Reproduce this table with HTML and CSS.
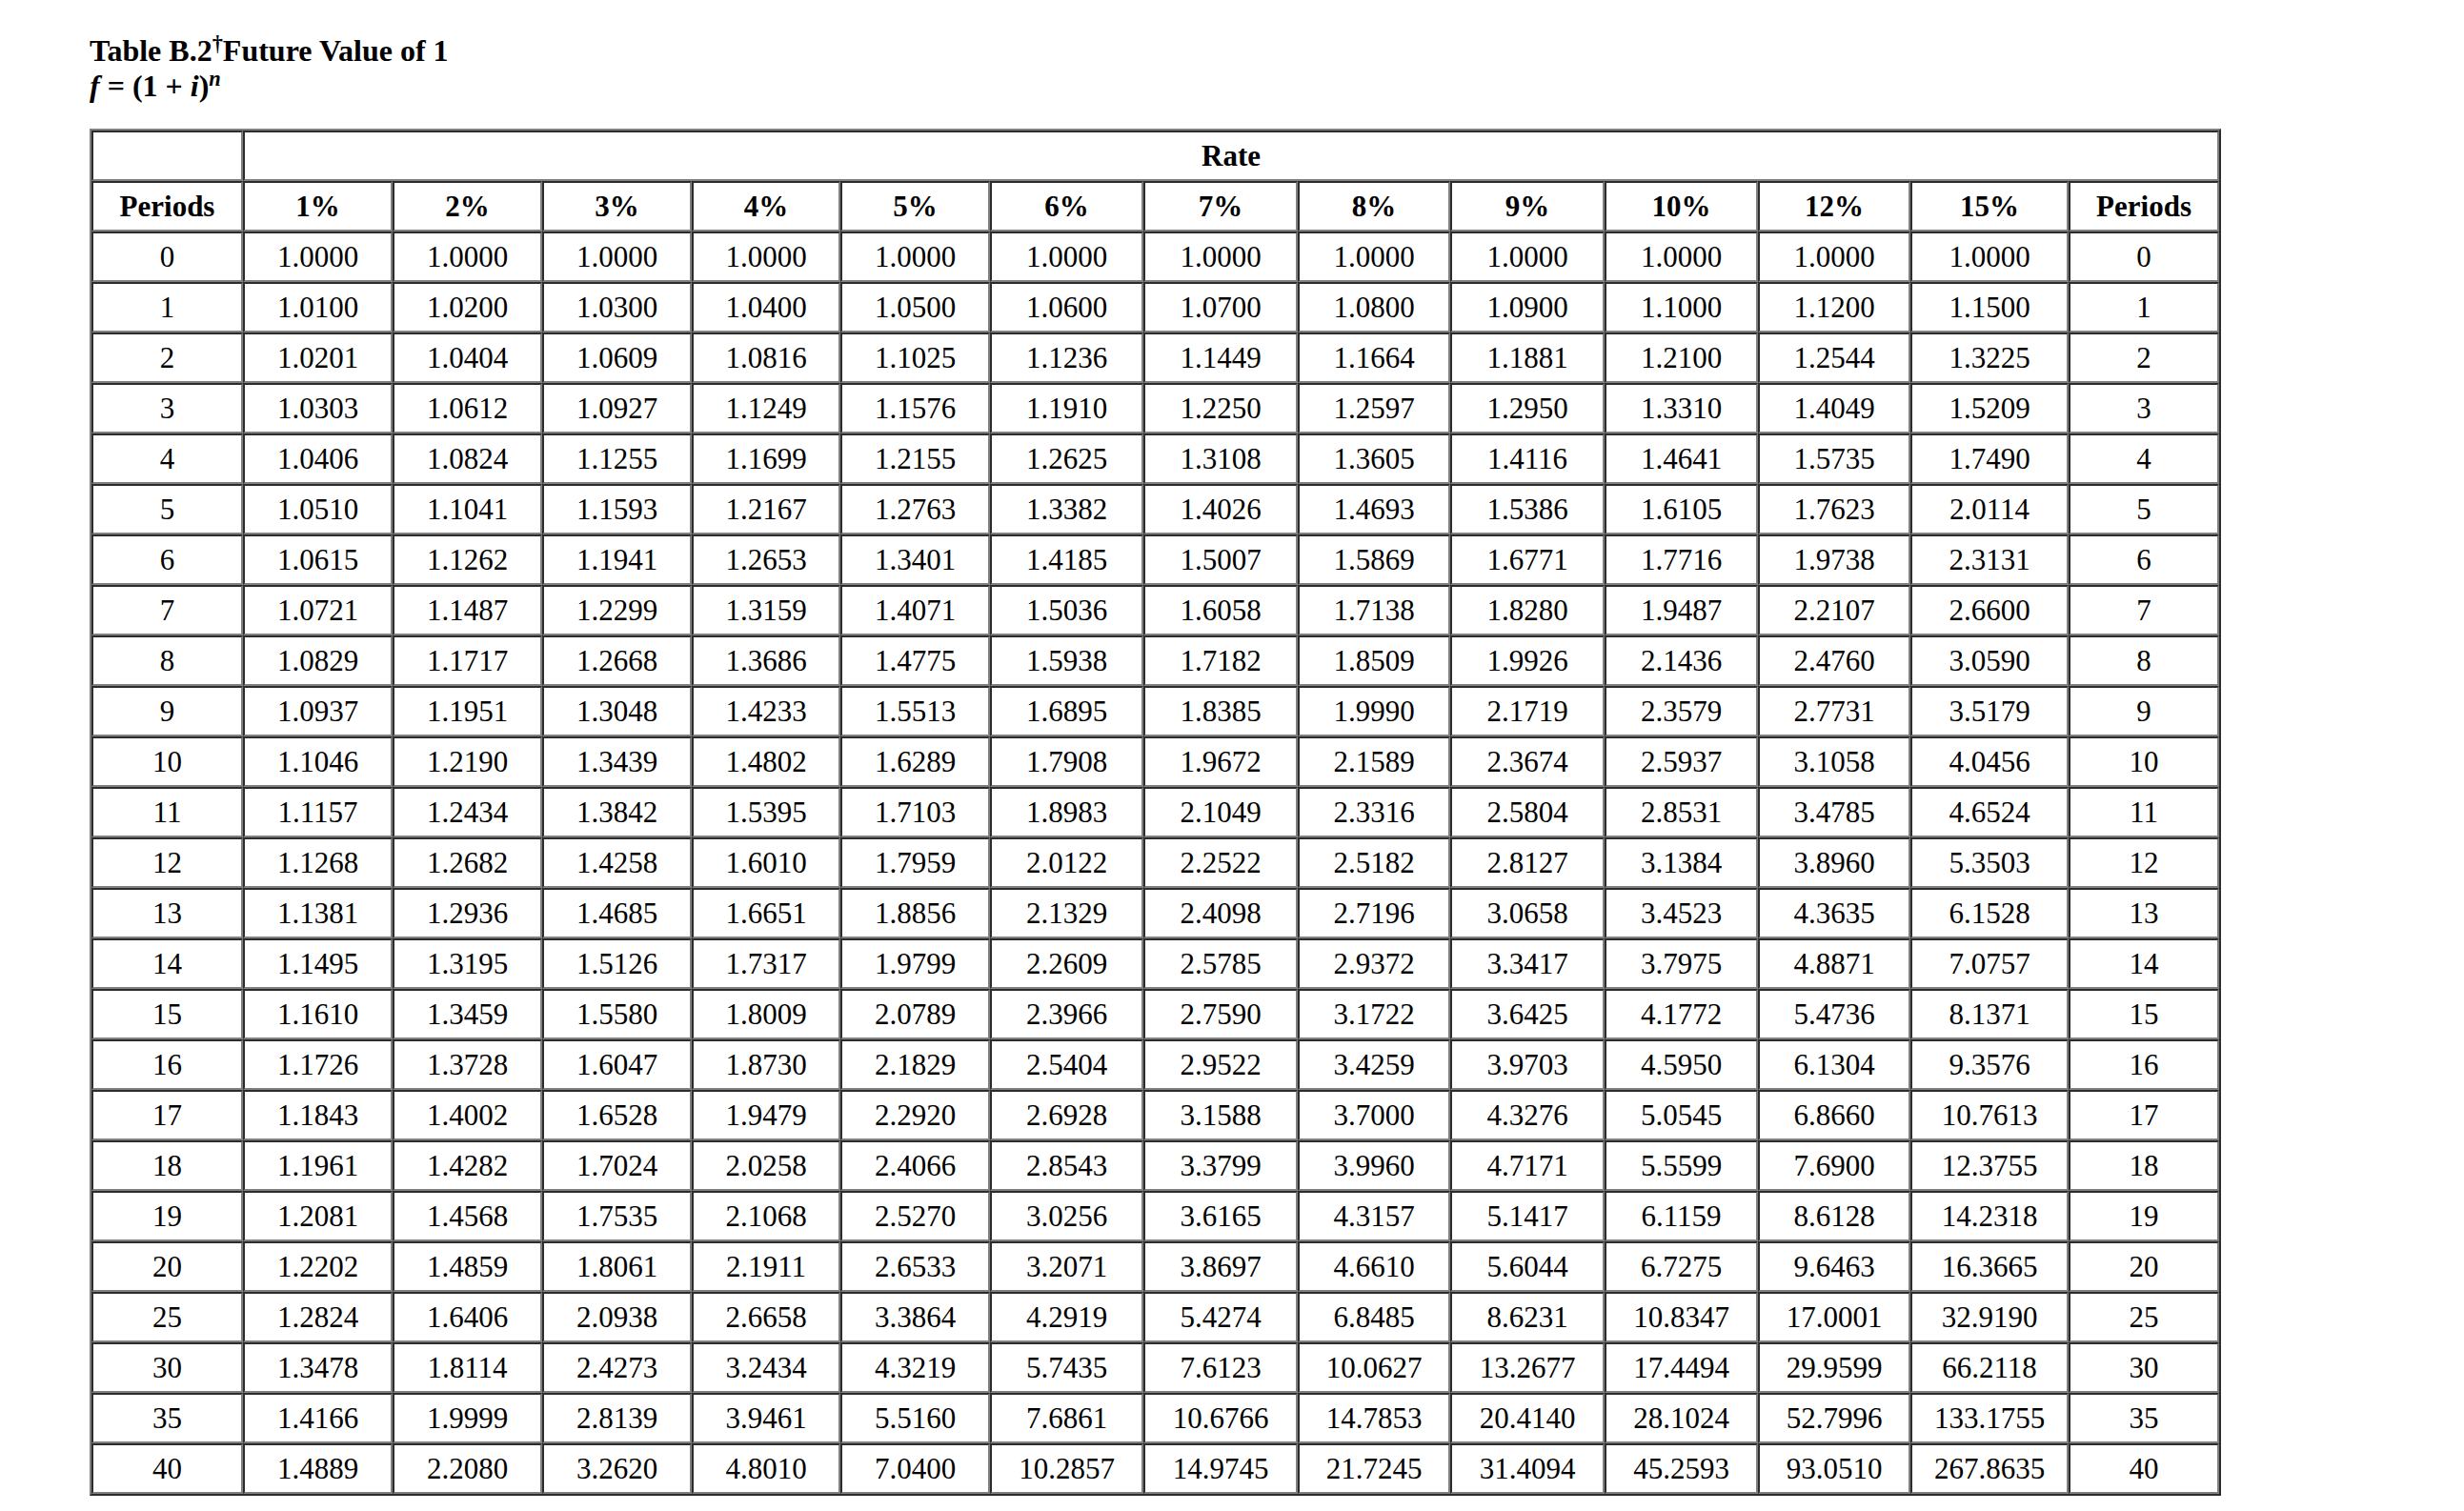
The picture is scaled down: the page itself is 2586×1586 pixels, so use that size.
FILE: index.html
```html
<!DOCTYPE html>
<html>
<head>
<meta charset="utf-8">
<link rel="stylesheet" href="styles.css">
</head>
<body>
<div class="page">
  <div class="title">Table B.2<sup class="dag">†</sup>Future Value of 1</div>
  <div class="formula"><i>f</i> = (1 + <i>i</i>)<sup><i>n</i></sup></div>
  <table class="fv">
    <colgroup>
      <col class="c-per1"><col class="c157"><col class="c157"><col class="c157"><col class="c156"><col class="c157"><col class="c161"><col class="c162"><col class="c160"><col class="c162"><col class="c161"><col class="c160"><col class="c166"><col class="c-per2">
    </colgroup>
    <tr class="hdr"><th></th><th colspan="13">Rate</th></tr>
    <tr class="hdr"><th>Periods</th><th>1%</th><th>2%</th><th>3%</th><th>4%</th><th>5%</th><th>6%</th><th>7%</th><th>8%</th><th>9%</th><th>10%</th><th>12%</th><th>15%</th><th>Periods</th></tr>
    <tr><td>0</td><td>1.0000</td><td>1.0000</td><td>1.0000</td><td>1.0000</td><td>1.0000</td><td>1.0000</td><td>1.0000</td><td>1.0000</td><td>1.0000</td><td>1.0000</td><td>1.0000</td><td>1.0000</td><td>0</td></tr>
    <tr><td>1</td><td>1.0100</td><td>1.0200</td><td>1.0300</td><td>1.0400</td><td>1.0500</td><td>1.0600</td><td>1.0700</td><td>1.0800</td><td>1.0900</td><td>1.1000</td><td>1.1200</td><td>1.1500</td><td>1</td></tr>
    <tr><td>2</td><td>1.0201</td><td>1.0404</td><td>1.0609</td><td>1.0816</td><td>1.1025</td><td>1.1236</td><td>1.1449</td><td>1.1664</td><td>1.1881</td><td>1.2100</td><td>1.2544</td><td>1.3225</td><td>2</td></tr>
    <tr><td>3</td><td>1.0303</td><td>1.0612</td><td>1.0927</td><td>1.1249</td><td>1.1576</td><td>1.1910</td><td>1.2250</td><td>1.2597</td><td>1.2950</td><td>1.3310</td><td>1.4049</td><td>1.5209</td><td>3</td></tr>
    <tr><td>4</td><td>1.0406</td><td>1.0824</td><td>1.1255</td><td>1.1699</td><td>1.2155</td><td>1.2625</td><td>1.3108</td><td>1.3605</td><td>1.4116</td><td>1.4641</td><td>1.5735</td><td>1.7490</td><td>4</td></tr>
    <tr><td>5</td><td>1.0510</td><td>1.1041</td><td>1.1593</td><td>1.2167</td><td>1.2763</td><td>1.3382</td><td>1.4026</td><td>1.4693</td><td>1.5386</td><td>1.6105</td><td>1.7623</td><td>2.0114</td><td>5</td></tr>
    <tr><td>6</td><td>1.0615</td><td>1.1262</td><td>1.1941</td><td>1.2653</td><td>1.3401</td><td>1.4185</td><td>1.5007</td><td>1.5869</td><td>1.6771</td><td>1.7716</td><td>1.9738</td><td>2.3131</td><td>6</td></tr>
    <tr><td>7</td><td>1.0721</td><td>1.1487</td><td>1.2299</td><td>1.3159</td><td>1.4071</td><td>1.5036</td><td>1.6058</td><td>1.7138</td><td>1.8280</td><td>1.9487</td><td>2.2107</td><td>2.6600</td><td>7</td></tr>
    <tr><td>8</td><td>1.0829</td><td>1.1717</td><td>1.2668</td><td>1.3686</td><td>1.4775</td><td>1.5938</td><td>1.7182</td><td>1.8509</td><td>1.9926</td><td>2.1436</td><td>2.4760</td><td>3.0590</td><td>8</td></tr>
    <tr><td>9</td><td>1.0937</td><td>1.1951</td><td>1.3048</td><td>1.4233</td><td>1.5513</td><td>1.6895</td><td>1.8385</td><td>1.9990</td><td>2.1719</td><td>2.3579</td><td>2.7731</td><td>3.5179</td><td>9</td></tr>
    <tr><td>10</td><td>1.1046</td><td>1.2190</td><td>1.3439</td><td>1.4802</td><td>1.6289</td><td>1.7908</td><td>1.9672</td><td>2.1589</td><td>2.3674</td><td>2.5937</td><td>3.1058</td><td>4.0456</td><td>10</td></tr>
    <tr><td>11</td><td>1.1157</td><td>1.2434</td><td>1.3842</td><td>1.5395</td><td>1.7103</td><td>1.8983</td><td>2.1049</td><td>2.3316</td><td>2.5804</td><td>2.8531</td><td>3.4785</td><td>4.6524</td><td>11</td></tr>
    <tr><td>12</td><td>1.1268</td><td>1.2682</td><td>1.4258</td><td>1.6010</td><td>1.7959</td><td>2.0122</td><td>2.2522</td><td>2.5182</td><td>2.8127</td><td>3.1384</td><td>3.8960</td><td>5.3503</td><td>12</td></tr>
    <tr><td>13</td><td>1.1381</td><td>1.2936</td><td>1.4685</td><td>1.6651</td><td>1.8856</td><td>2.1329</td><td>2.4098</td><td>2.7196</td><td>3.0658</td><td>3.4523</td><td>4.3635</td><td>6.1528</td><td>13</td></tr>
    <tr><td>14</td><td>1.1495</td><td>1.3195</td><td>1.5126</td><td>1.7317</td><td>1.9799</td><td>2.2609</td><td>2.5785</td><td>2.9372</td><td>3.3417</td><td>3.7975</td><td>4.8871</td><td>7.0757</td><td>14</td></tr>
    <tr><td>15</td><td>1.1610</td><td>1.3459</td><td>1.5580</td><td>1.8009</td><td>2.0789</td><td>2.3966</td><td>2.7590</td><td>3.1722</td><td>3.6425</td><td>4.1772</td><td>5.4736</td><td>8.1371</td><td>15</td></tr>
    <tr><td>16</td><td>1.1726</td><td>1.3728</td><td>1.6047</td><td>1.8730</td><td>2.1829</td><td>2.5404</td><td>2.9522</td><td>3.4259</td><td>3.9703</td><td>4.5950</td><td>6.1304</td><td>9.3576</td><td>16</td></tr>
    <tr><td>17</td><td>1.1843</td><td>1.4002</td><td>1.6528</td><td>1.9479</td><td>2.2920</td><td>2.6928</td><td>3.1588</td><td>3.7000</td><td>4.3276</td><td>5.0545</td><td>6.8660</td><td>10.7613</td><td>17</td></tr>
    <tr><td>18</td><td>1.1961</td><td>1.4282</td><td>1.7024</td><td>2.0258</td><td>2.4066</td><td>2.8543</td><td>3.3799</td><td>3.9960</td><td>4.7171</td><td>5.5599</td><td>7.6900</td><td>12.3755</td><td>18</td></tr>
    <tr><td>19</td><td>1.2081</td><td>1.4568</td><td>1.7535</td><td>2.1068</td><td>2.5270</td><td>3.0256</td><td>3.6165</td><td>4.3157</td><td>5.1417</td><td>6.1159</td><td>8.6128</td><td>14.2318</td><td>19</td></tr>
    <tr><td>20</td><td>1.2202</td><td>1.4859</td><td>1.8061</td><td>2.1911</td><td>2.6533</td><td>3.2071</td><td>3.8697</td><td>4.6610</td><td>5.6044</td><td>6.7275</td><td>9.6463</td><td>16.3665</td><td>20</td></tr>
    <tr><td>25</td><td>1.2824</td><td>1.6406</td><td>2.0938</td><td>2.6658</td><td>3.3864</td><td>4.2919</td><td>5.4274</td><td>6.8485</td><td>8.6231</td><td>10.8347</td><td>17.0001</td><td>32.9190</td><td>25</td></tr>
    <tr><td>30</td><td>1.3478</td><td>1.8114</td><td>2.4273</td><td>3.2434</td><td>4.3219</td><td>5.7435</td><td>7.6123</td><td>10.0627</td><td>13.2677</td><td>17.4494</td><td>29.9599</td><td>66.2118</td><td>30</td></tr>
    <tr><td>35</td><td>1.4166</td><td>1.9999</td><td>2.8139</td><td>3.9461</td><td>5.5160</td><td>7.6861</td><td>10.6766</td><td>14.7853</td><td>20.4140</td><td>28.1024</td><td>52.7996</td><td>133.1755</td><td>35</td></tr>
    <tr><td>40</td><td>1.4889</td><td>2.2080</td><td>3.2620</td><td>4.8010</td><td>7.0400</td><td>10.2857</td><td>14.9745</td><td>21.7245</td><td>31.4094</td><td>45.2593</td><td>93.0510</td><td>267.8635</td><td>40</td></tr>
  </table>
</div>
</body>
</html>
```

FILE: styles.css
```css
html, body {
  margin: 0;
  padding: 0;
  background: #ffffff;
}

.page {
  padding: 35px 0 0 94px;
  font-family: "Liberation Serif", "Times New Roman", serif;
  color: #000000;
}

.title,
.formula {
  font-size: 32px;
  font-weight: bold;
  line-height: 37px;
  white-space: nowrap;
}

.title sup,
.formula sup {
  font-size: 0.7em;
  line-height: 0;
  vertical-align: 0.5em;
}

.formula i {
  font-style: italic;
}

.fv {
  margin-top: 26px;
  border-collapse: separate;
  border-spacing: 0;
  table-layout: fixed;
  width: 2237px;
  border-style: solid;
  border-width: 2px;
  border-color: #808080 #2c2c2c #2c2c2c #808080;
  font-size: 31px;
}

.fv th,
.fv td {
  border-style: solid;
  border-width: 2px;
  border-color: #2c2c2c #808080 #808080 #2c2c2c;
  height: 49px;
  padding: 0 4px;
  text-align: center;
  vertical-align: middle;
  line-height: 35px;
  box-sizing: content-box;
  white-space: nowrap;
}

.fv th {
  font-weight: bold;
}

.fv td {
  font-weight: normal;
}

.c-per1 { width: 159px; }
.c157 { width: 157px; }
.c156 { width: 156px; }
.c160 { width: 160px; }
.c161 { width: 161px; }
.c162 { width: 162px; }
.c166 { width: 166px; }
.c-per2 { width: 158px; }
```
